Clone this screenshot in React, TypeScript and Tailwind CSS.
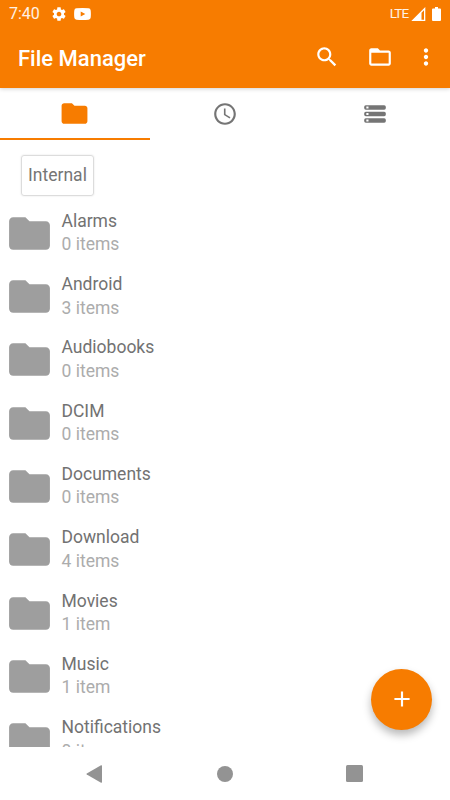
import React from 'react';

interface FolderEntry {
  name: string;
  info: string;
}

interface IconProps {
  path: string;
  className?: string;
}

const ICONS = {
  search: 'M15.5 14h-.79l-.28-.27C15.41 12.59 16 11.11 16 9.5 16 5.91 13.09 3 9.5 3S3 5.91 3 9.5 5.91 16 9.5 16c1.61 0 3.09-.59 4.23-1.57l.27.28v.79l5 4.99L20.49 19l-4.99-5zm-6 0C7.01 14 5 11.99 5 9.5S7.01 5 9.5 5 14 7.01 14 9.5 11.99 14 9.5 14z',
  folder: 'M10 4H4c-1.1 0-1.99.9-1.99 2L2 18c0 1.1.9 2 2 2h16c1.1 0 2-.9 2-2V8c0-1.1-.9-2-2-2h-8l-2-2z',
  folderOutline: 'M20 6h-8l-2-2H4c-1.1 0-1.99.9-1.99 2L2 18c0 1.1.9 2 2 2h16c1.1 0 2-.9 2-2V8c0-1.1-.9-2-2-2zm0 12H4V8h16v10z',
  more: 'M12 8c1.1 0 2-.9 2-2s-.9-2-2-2-2 .9-2 2 .9 2 2 2zm0 2c-1.1 0-2 .9-2 2s.9 2 2 2 2-.9 2-2-.9-2-2-2zm0 6c-1.1 0-2 .9-2 2s.9 2 2 2 2-.9 2-2-.9-2-2-2z',
  clock: 'M11.99 2C6.47 2 2 6.48 2 12s4.47 10 9.99 10C17.52 22 22 17.52 22 12S17.52 2 11.99 2zM12 20c-4.42 0-8-3.58-8-8s3.58-8 8-8 8 3.58 8 8-3.58 8-8 8zm.5-13H11v6l5.25 3.15.75-1.23-4.5-2.67z',
  storage: 'M3.5 20h17a1.5 1.5 0 0 0 1.5-1.5v-1a1.5 1.5 0 0 0-1.5-1.5h-17A1.5 1.5 0 0 0 2 17.5v1A1.5 1.5 0 0 0 3.5 20zM4 17h2v2H4v-2zM2 5.5v1A1.5 1.5 0 0 0 3.5 8h17A1.5 1.5 0 0 0 22 6.5v-1A1.5 1.5 0 0 0 20.5 4h-17A1.5 1.5 0 0 0 2 5.5zM6 7H4V5h2v2zM3.5 14h17a1.5 1.5 0 0 0 1.5-1.5v-1a1.5 1.5 0 0 0-1.5-1.5h-17A1.5 1.5 0 0 0 2 11.5v1A1.5 1.5 0 0 0 3.5 14zM4 11h2v2H4v-2z',
  add: 'M19 13h-6v6h-2v-6H5v-2h6V5h2v6h6v2z',
  settings: 'M19.43 12.98c.04-.32.07-.64.07-.98s-.03-.66-.07-.98l2.11-1.65c.19-.15.24-.42.12-.64l-2-3.46c-.12-.22-.39-.3-.61-.22l-2.49 1c-.52-.4-1.08-.73-1.69-.98l-.38-2.65C14.46 2.18 14.25 2 14 2h-4c-.25 0-.46.18-.49.42l-.38 2.65c-.61.25-1.17.59-1.69.98l-2.49-1c-.23-.09-.49 0-.61.22l-2 3.46c-.13.22-.07.49.12.64l2.11 1.65c-.04.32-.07.65-.07.98s.03.66.07.98l-2.11 1.65c-.19.15-.24.42-.12.64l2 3.46c.12.22.39.3.61.22l2.49-1c.52.4 1.08.73 1.69.98l.38 2.65c.03.24.24.42.49.42h4c.25 0 .46-.18.49-.42l.38-2.65c.61-.25 1.17-.59 1.69-.98l2.49 1c.23.09.49 0 .61-.22l2-3.46c.12-.22.07-.49-.12-.64l-2.11-1.65zM12 15.5c-1.93 0-3.5-1.57-3.5-3.5s1.57-3.5 3.5-3.5 3.5 1.57 3.5 3.5-1.57 3.5-3.5 3.5z',
};

const folders: FolderEntry[] = [
  { name: 'Alarms', info: '0 items' },
  { name: 'Android', info: '3 items' },
  { name: 'Audiobooks', info: '0 items' },
  { name: 'DCIM', info: '0 items' },
  { name: 'Documents', info: '0 items' },
  { name: 'Download', info: '4 items' },
  { name: 'Movies', info: '1 item' },
  { name: 'Music', info: '1 item' },
  { name: 'Notifications', info: '0 items' },
];

const Icon: React.FC<IconProps> = ({ path, className }) => (
  <svg viewBox="0 0 24 24" fill="currentColor" className={`shrink-0 ${className ?? ''}`}>
    <path d={path} />
  </svg>
);

const StatusBar = () => (
  <div className="flex h-[27px] items-center px-[9px]">
    <span className="w-[41.5px] pt-px text-[16px] leading-none text-white/90">7:40</span>
    <Icon path={ICONS.settings} className="h-4 w-4" />
    <svg viewBox="0 0 17 12" className="ml-[7px] h-3 w-[17px]" fill="currentColor">
      <path fillRule="evenodd" d="M2.5.3Q8.5-.2 14.5.3Q16.5.4 16.7 2.5Q17.1 6 16.7 9.5Q16.5 11.6 14.5 11.7Q8.5 12.2 2.5 11.7Q.5 11.6.3 9.5Q-.1 6 .3 2.5Q.5.4 2.5.3zM6.7 3.4v5.2L11.3 6z" />
    </svg>
    <span className="ml-auto text-[13.5px] leading-none tracking-[-0.8px] text-white/90">LTE</span>
    <svg viewBox="0 0 15 14" className="ml-[2.5px] h-[14px] w-[15px]" fill="currentColor">
      <path fillRule="evenodd" d="M14.3 0v14H.3zM13 3.2l-2.5 2.5v7H13z" />
    </svg>
    <svg viewBox="0 0 9 14" className="ml-[6px] h-[14px] w-[9px]" fill="currentColor">
      <path d="M3 0h3v1.500h2q1 0 1 1V13q0 1-1 1H1q-1 0-1-1V2.500q0-1 1-1h2z" />
    </svg>
  </div>
);

const Toolbar = () => (
  <div className="flex h-[61px] items-center pl-[18px] pr-[11px]">
    <h1 className="mr-auto pt-[2px] text-[22px] font-medium leading-none">File Manager</h1>
    <button className="mr-[27px] pb-px">
      <Icon path={ICONS.search} className="h-[26px] w-[26px]" />
    </button>
    <button className="mr-[20.5px] pb-px">
      <Icon path={ICONS.folderOutline} className="h-[26px] w-[26px]" />
    </button>
    <button className="pb-px">
      <Icon path={ICONS.more} className="h-[26px] w-[26px]" />
    </button>
  </div>
);

const Tabs = () => (
  <div className="grid h-[52px] grid-cols-3 text-[#757575]">
    <button className="flex items-center justify-center border-b-2 border-[#f77c00] pt-px pr-px text-[#f77c00]">
      <Icon path={ICONS.folder} className="h-[31px] w-[31px]" />
    </button>
    <button className="flex items-center justify-center">
      <Icon path={ICONS.clock} className="h-[26px] w-[26px]" />
    </button>
    <button className="flex items-center justify-center pr-px">
      <Icon path={ICONS.storage} className="h-[26px] w-[26px]" />
    </button>
  </div>
);

const FolderRow: React.FC<{ folder: FolderEntry }> = ({ folder }) => (
  <li className="flex h-[63.3px] items-center pl-[5px]">
    <Icon path={ICONS.folder} className="h-[49px] w-[49px] text-[#9e9e9e]" />
    <div className="ml-[7.5px] text-[17.5px] leading-[23.5px]">
      <p className="text-[#727272]">{folder.name}</p>
      <p className="text-[#acacac]">{folder.info}</p>
    </div>
  </li>
);

const NavBar = () => (
  <nav className="flex h-[53px] items-center justify-between pl-[86px] pr-[87px] text-[#939393]">
    <svg viewBox="0 0 17 18" className="h-[18px] w-4" fill="currentColor" preserveAspectRatio="none">
      <path d="M16 .3Q17 0 17 1v16q0 1-1 .7L.8 9.600Q0 9 .8 8.400z" />
    </svg>
    <div className="ml-px h-4 w-4 rounded-full bg-[#939393]" />
    <div className="h-[17px] w-[17px] rounded-[1.5px] bg-[#939393]" />
  </nav>
);

export default function App() {
  return (
    <div className="relative flex h-[800px] w-[450px] flex-col overflow-hidden bg-white font-['Roboto',sans-serif]">
      <header className="bg-[#f77c00] text-white shadow-[0_1px_4px_rgba(0,0,0,0.18)]">
        <StatusBar />
        <Toolbar />
      </header>
      <Tabs />
      <main className="min-h-0 flex-1 overflow-hidden">
        <div className="h-[61.6px] pl-[21px] pt-[14.5px]">
          <button className="flex h-[41.5px] w-[73px] items-center justify-center rounded-[3px] border-[1.5px] border-[#dcdcdc] text-[17.5px] text-[#757575] shadow-[0_0_2px_rgba(0,0,0,0.12)]">
            Internal
          </button>
        </div>
        <ul>
          {folders.map((folder) => (
            <FolderRow key={folder.name} folder={folder} />
          ))}
        </ul>
      </main>
      <NavBar />
      <button className="absolute bottom-[70px] right-[18px] flex h-[61px] w-[61px] items-center justify-center rounded-full bg-[#f77c00] pb-px text-white shadow-[0_5px_9px_rgba(0,0,0,0.28)]">
        <Icon path={ICONS.add} className="h-[26px] w-[26px]" />
      </button>
    </div>
  );
}
